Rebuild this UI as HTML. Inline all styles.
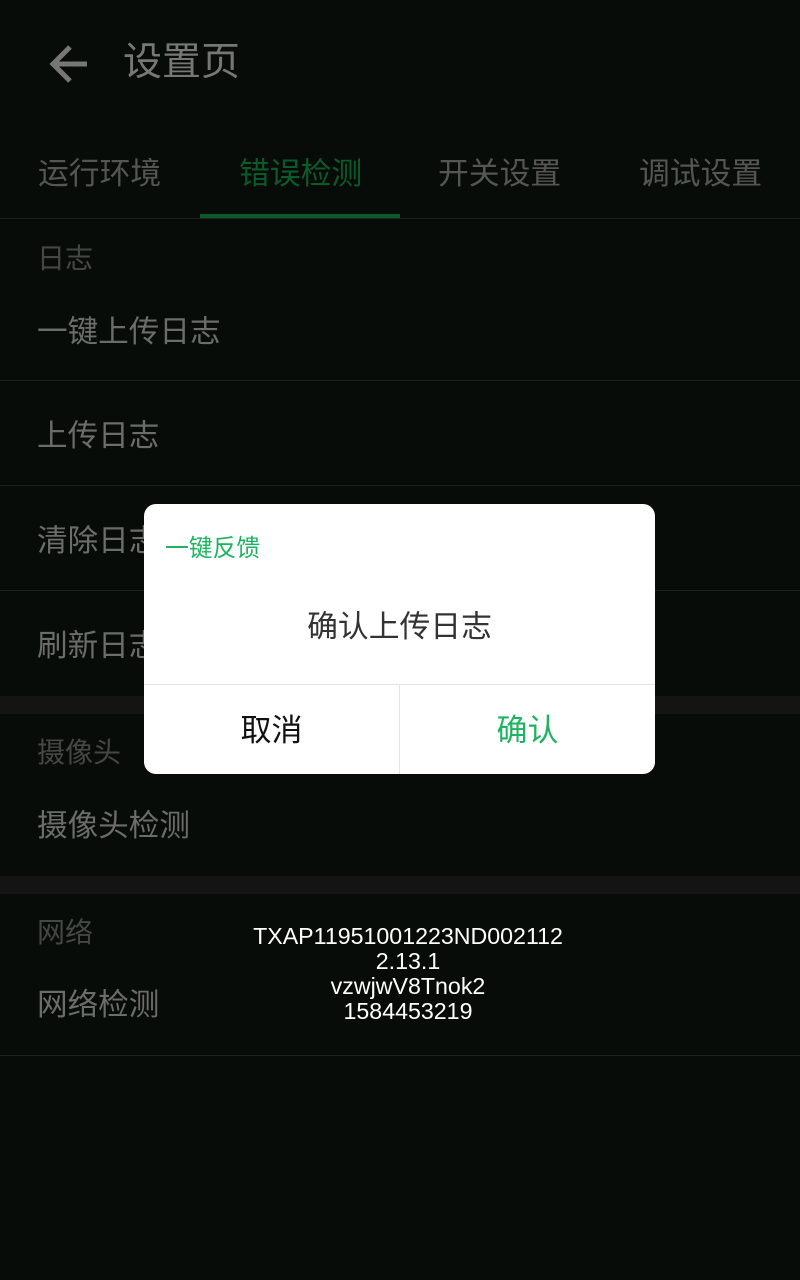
<!DOCTYPE html>
<html><head><meta charset="utf-8"><style>
*{margin:0;padding:0;box-sizing:border-box}
body{width:800px;height:1280px;background:#080c09;font-family:"Liberation Sans","Noto Sans CJK SC",sans-serif;position:relative;overflow:hidden}
.a{position:absolute;white-space:nowrap;line-height:1}
.it{color:#6c6c6c;font-size:30.6px;left:37px}
.hd{color:#464646;font-size:28px;left:37px}
.ln{position:absolute;left:0;width:800px;height:1px;background:#1e221f}
.band{position:absolute;left:0;width:800px;height:18px;background:#141414}
</style></head><body>
<svg class="a" style="left:48px;top:44px" width="42" height="40" viewBox="0 0 42 40"><path d="M39 20H5M22 3L5 20L22 37" stroke="#777" stroke-width="5" fill="none"/></svg>
<div class="a" style="left:123px;top:43px;font-size:39px;color:#777">设置页</div>
<div class="a" style="left:38px;top:159px;font-size:30.8px;color:#555">运行环境</div>
<div class="a" style="left:239px;top:159px;font-size:30.8px;color:#0b5a2b">错误检测</div>
<div class="a" style="left:438px;top:159px;font-size:30.8px;color:#555">开关设置</div>
<div class="a" style="left:639px;top:159px;font-size:30.8px;color:#555">调试设置</div>
<div class="ln" style="top:218px"></div>
<div class="a" style="left:200px;top:214px;width:200px;height:4px;background:#0b5a2b"></div>
<div class="a hd" style="top:245px">日志</div>
<div class="a it" style="top:317px">一键上传日志</div>
<div class="ln" style="top:380px"></div>
<div class="a it" style="top:421px">上传日志</div>
<div class="ln" style="top:485px"></div>
<div class="a it" style="top:526px">清除日志</div>
<div class="ln" style="top:590px"></div>
<div class="a it" style="top:631px">刷新日志</div>
<div class="band" style="top:696px"></div>
<div class="a hd" style="top:739px">摄像头</div>
<div class="a it" style="top:811px">摄像头检测</div>
<div class="band" style="top:876px"></div>
<div class="a hd" style="top:919px">网络</div>
<div class="a it" style="top:990px">网络检测</div>
<div class="ln" style="top:1055px"></div>
<div class="a" style="left:208px;width:400px;top:924px;text-align:center;color:#fff;font-size:23.2px;line-height:25px">TXAP11951001223ND002112<br>2.13.1<br>vzwjwV8Tnok2<br>1584453219</div>
<div class="a" style="left:144px;top:504px;width:511px;height:270px;background:#fff;border-radius:12px;overflow:hidden">
<div class="a" style="left:21px;top:33px;font-size:23.8px;color:#1db360">一键反馈</div>
<div class="a" style="left:0;width:511px;top:108px;text-align:center;font-size:30.8px;color:#333">确认上传日志</div>
<div class="a" style="left:0;top:180px;width:511px;height:1px;background:#e4e4e4"></div>
<div class="a" style="left:255px;top:181px;width:1px;height:89px;background:#e4e4e4"></div>
<div class="a" style="left:0;width:255px;top:211px;text-align:center;font-size:31px;color:#111">取消</div>
<div class="a" style="left:256px;width:255px;top:211px;text-align:center;font-size:31px;color:#1db360">确认</div>
</div>
</body></html>
